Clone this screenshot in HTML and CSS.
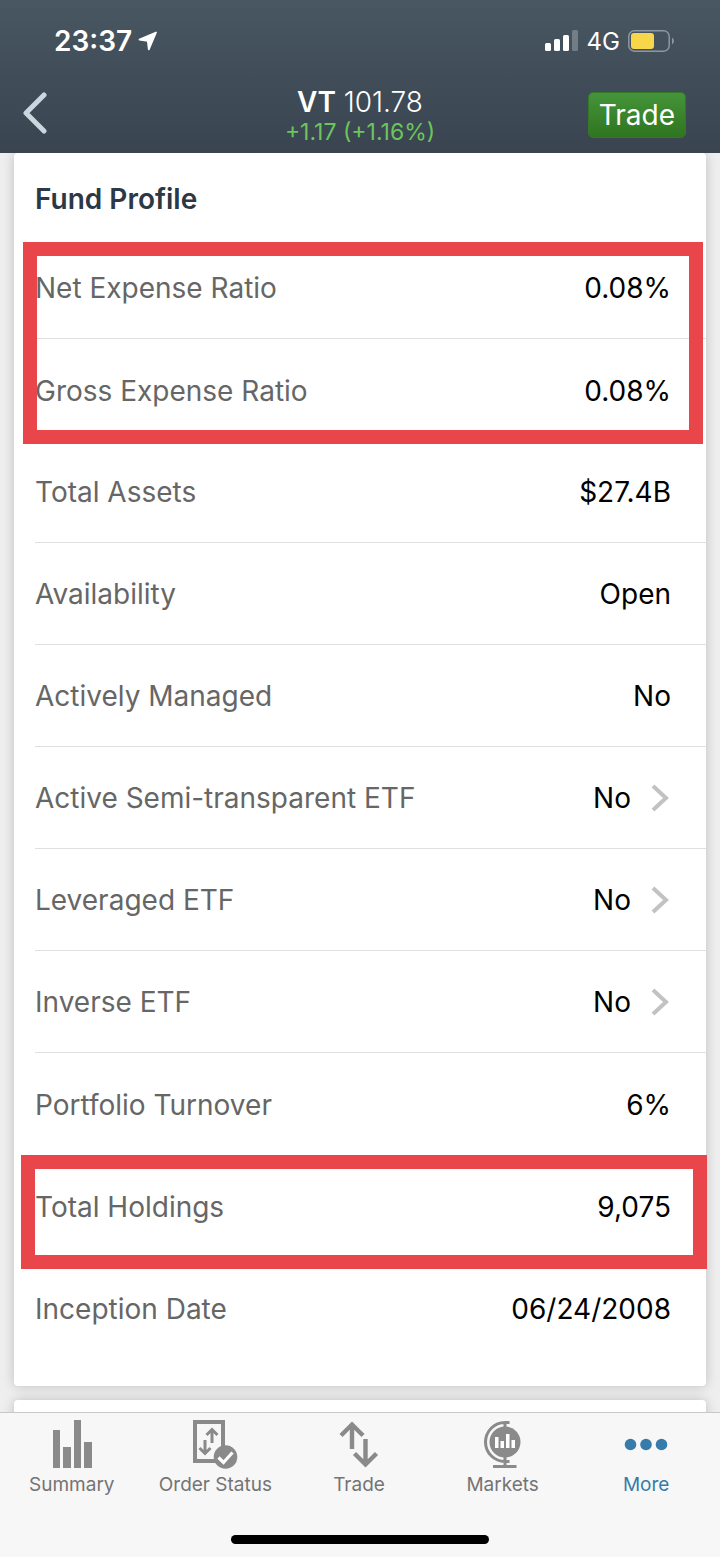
FILE: index.html
```
<!DOCTYPE html>
<html lang="en">

<head>
    <meta charset="UTF-8">
    <meta name="viewport" content="width=device-width, initial-scale=1.0">
    <title>VT - Fund Profile</title>
    <link rel="stylesheet" href="styles.css">
</head>

<body>
    <div class="app">
        <header class="header">
            <div class="status-bar">
                <div class="status-left">
                    <span class="time">23:37</span>
                    <svg width="20" height="20" viewBox="0 0 20 20" aria-hidden="true">
                        <path d="M18 1.500 1.500 8.600 9.800 9.800 10.800 18.300Z" fill="#fff" stroke="#fff" stroke-width="1.800" stroke-linejoin="round"/>
                    </svg>
                </div>
                <div class="status-right">
                    <svg width="34" height="22" viewBox="0 0 34 22" aria-hidden="true">
                        <rect x="0" y="13" width="6" height="8" rx="1.5" fill="#fff"/>
                        <rect x="9" y="9" width="6" height="12" rx="1.5" fill="#fff"/>
                        <rect x="18" y="5" width="6" height="16" rx="1.5" fill="#fff"/>
                        <rect x="27" y="0" width="6" height="21" rx="1.5" fill="#fff" opacity=".25"/>
                    </svg>
                    <span class="network">4G</span>
                    <svg width="47" height="22" viewBox="0 0 47 22" aria-hidden="true">
                        <rect x=".8" y=".8" width="40.4" height="20.4" rx="5.5" fill="none" stroke="#8d979f" stroke-width="1.5"/>
                        <rect x="3" y="3" width="23" height="16" rx="3" fill="#f7d64a"/>
                        <path d="M44 7.5Q46 8.5 46 11T44 14.5Z" fill="#8d979f"/>
                    </svg>
                </div>
            </div>
            <div class="nav-bar">
                <button class="back" type="button" aria-label="Back">
                    <svg width="26" height="42" viewBox="0 0 26 42" aria-hidden="true">
                        <path d="M22 3 4 21 22 39" fill="none" stroke="#cbd7df" stroke-width="5" stroke-linecap="round" stroke-linejoin="round"/>
                    </svg>
                </button>
                <div class="quote">
                    <div class="price"><strong>VT</strong> 101.78</div>
                    <div class="change">+1.17 (+1.16%)</div>
                </div>
                <button class="trade" type="button">Trade</button>
            </div>
        </header>

        <main class="content">
            <section class="card profile">
                <h1>Fund Profile</h1>
                <dl class="highlight expenses">
                    <div class="row"><dt>Net Expense Ratio</dt><dd>0.08%</dd></div>
                    <div class="row last"><dt>Gross Expense Ratio</dt><dd>0.08%</dd></div>
                </dl>
                <dl>
                    <div class="row"><dt>Total Assets</dt><dd>$27.4B</dd></div>
                    <div class="row"><dt>Availability</dt><dd>Open</dd></div>
                    <div class="row"><dt>Actively Managed</dt><dd>No</dd></div>
                    <div class="row"><dt>Active Semi-transparent ETF</dt><dd><a href="#semi-transparent">No
                        <svg width="20" height="28" viewBox="0 0 20 28" aria-hidden="true"><path d="M2 2 15 14 2 26"/></svg></a></dd></div>
                    <div class="row"><dt>Leveraged ETF</dt><dd><a href="#leveraged">No
                        <svg width="20" height="28" viewBox="0 0 20 28" aria-hidden="true"><path d="M2 2 15 14 2 26"/></svg></a></dd></div>
                    <div class="row"><dt>Inverse ETF</dt><dd><a href="#inverse">No
                        <svg width="20" height="28" viewBox="0 0 20 28" aria-hidden="true"><path d="M2 2 15 14 2 26"/></svg></a></dd></div>
                    <div class="row last"><dt>Portfolio Turnover</dt><dd>6%</dd></div>
                </dl>
                <dl class="highlight holdings">
                    <div class="row last"><dt>Total Holdings</dt><dd>9,075</dd></div>
                </dl>
                <dl>
                    <div class="row last"><dt>Inception Date</dt><dd>06/24/2008</dd></div>
                </dl>
            </section>
            <section class="card next"></section>
        </main>

        <footer class="tab-bar">
            <nav class="tabs">
                <a class="tab" href="#summary">
                    <svg width="50" height="50" viewBox="0 0 50 50" aria-hidden="true">
                        <path d="M6 11h7v38H6zM16 28h8v21h-8zM27 1h7v48h-7zM37 23h8v26h-8z"/>
                    </svg>
                    Summary
                </a>
                <a class="tab" href="#orders">
                    <svg width="50" height="50" viewBox="0 0 50 50" aria-hidden="true">
                        <path d="M5 3h28v39H5z" fill="none" stroke="currentColor" stroke-width="4"/>
                        <path d="M22 24V11M16.500 16 22 10.500 27.500 16M15 21v13M9.500 29 15 34.500 20.500 29" fill="none" stroke="currentColor" stroke-width="3"/>
                        <circle cx="35.500" cy="38" r="11.800"/>
                        <path d="m28.500 38.500 5 5 9-10" fill="none" stroke="#fff" stroke-width="3.200"/>
                    </svg>
                    Order Status
                </a>
                <a class="tab" href="#trade">
                    <svg width="50" height="50" viewBox="0 0 50 50" aria-hidden="true">
                        <path d="M18 30V5M7 16.500 18 5.500 29 16.500M31.500 20v26M20.500 34.500 31.500 45.500 42.500 34.500" fill="none" stroke="currentColor" stroke-width="4.400"/>
                    </svg>
                    Trade
                </a>
                <a class="tab" href="#markets">
                    <svg width="50" height="50" viewBox="0 0 50 50" aria-hidden="true">
                        <circle cx="27" cy="23" r="15.500"/>
                        <path d="M31.500 3.500H27A19.500 19.500 0 0 0 27 42.500H31.500M27 3v6M27 36v11M15 47.500h23.500" fill="none" stroke="currentColor" stroke-width="3"/>
                        <path d="M17 18h3.500v11H17zM22.500 22H26v7h-3.500zM28 15h3.500v14H28zM33.500 21H37v8h-3.500z" fill="#fff"/>
                    </svg>
                    Markets
                </a>
                <a class="tab active" href="#more" aria-current="page">
                    <svg width="50" height="50" viewBox="0 0 50 50" aria-hidden="true">
                        <circle cx="9.500" cy="25.500" r="5.800"/>
                        <circle cx="25" cy="25.500" r="5.800"/>
                        <circle cx="40.500" cy="25.500" r="5.800"/>
                    </svg>
                    More
                </a>
            </nav>
            <div class="home-indicator"></div>
        </footer>
    </div>
</body>

</html>
```
FILE: styles.css
```
* {
    box-sizing: border-box;
}

body {
    margin: 0;
    font-family: Inter, "Liberation Sans", sans-serif;
    background-color: #eee;
}

button {
    border: none;
    padding: 0;
    font-family: inherit;
    cursor: pointer;
}

a {
    color: inherit;
    text-decoration: none;
}

svg {
    display: block;
    flex: none;
}

.app {
    display: flex;
    flex-direction: column;
    height: 100vh;
}

/* header */
.header {
    flex: none;
    color: #fff;
    background: linear-gradient(#485762, #394450);
}

.status-bar {
    display: flex;
    justify-content: space-between;
    align-items: center;
    height: 82px;
    padding: 0 45px 0 54px;
}

.status-left,
.status-right {
    display: flex;
    align-items: center;
    gap: 8px;
}

.status-left {
    gap: 6px;
}

.time {
    font-size: 28px;
    font-weight: 600;
}

.network {
    font-size: 24px;
}

.nav-bar {
    display: grid;
    grid-template-columns: 1fr auto 1fr;
    align-items: start;
    height: 71px;
    padding: 4px 34px 0 22px;
}

.back {
    justify-self: start;
    margin-top: 6px;
    background: none;
}

.quote {
    padding-left: 12px;
    text-align: center;
}

.price {
    font-size: 28px;
    font-weight: 300;
    line-height: 32px;
}

.price strong {
    font-weight: 600;
}

.change {
    font-size: 23px;
    line-height: 29px;
    color: #6cc45c;
}

.trade {
    justify-self: end;
    margin-top: 6px;
    height: 46px;
    padding: 0 10px;
    border: 1px solid #34782a;
    border-radius: 5px;
    font-size: 28px;
    color: #fff;
    background: linear-gradient(#45943a, #2f751f);
}

/* cards */
.content {
    flex: 1;
    min-height: 0;
    padding: 0 14px;
    overflow: auto;
    scrollbar-width: none;
}

.card {
    border-radius: 4px;
    background-color: #fff;
    box-shadow: 0 0 12px rgba(0, 0, 0, 0.2);
}

.profile {
    padding-bottom: 27px;
}

.next {
    height: 300px;
    margin-top: 14px;
}

h1 {
    margin: 0;
    padding: 28px 21px 20px;
    font-size: 28px;
    font-weight: 600;
    line-height: 36px;
    color: #2c3845;
}

dl {
    margin: 0;
}

.row {
    display: flex;
    justify-content: space-between;
    align-items: center;
    height: 102px;
    margin-left: 21px;
    padding: 1px 35px 0 0;
    border-bottom: 1px solid #dfdfdf;
    font-size: 28px;
}

.row.last {
    border-bottom: none;
}

dt {
    color: #666;
}

dd {
    margin: 0;
    color: #000;
}

dd a {
    display: flex;
    align-items: center;
    gap: 20px;
}

dd path {
    fill: none;
    stroke: #c2c2c2;
    stroke-width: 4;
}

/* red frames drawn over the rows */
.highlight {
    position: relative;
}

.highlight::after {
    content: "";
    position: absolute;
    border: 14px solid #e8464b;
    pointer-events: none;
}

.expenses::after {
    inset: 5px 3px -3px 9px;
}

.holdings::after {
    inset: 0 -1px -12px 7px;
}

/* tab bar */
.tab-bar {
    flex: none;
    border-top: 1px solid #c8c8c8;
    background-color: #f7f7f7;
}

.tabs {
    display: grid;
    grid-template-columns: repeat(5, 1fr);
    padding: 6px 2px 0 0;
}

.tab {
    display: flex;
    flex-direction: column;
    align-items: center;
    gap: 4px;
    font-size: 19px;
    line-height: 24px;
    color: #747474;
}

.tab svg {
    color: #8a8a8a;
    fill: currentColor;
}

.tab.active,
.tab.active svg {
    color: #377baa;
}

.home-indicator {
    width: 258px;
    height: 9px;
    margin: 38px auto 13px;
    border-radius: 5px;
    background-color: #000;
}
```
